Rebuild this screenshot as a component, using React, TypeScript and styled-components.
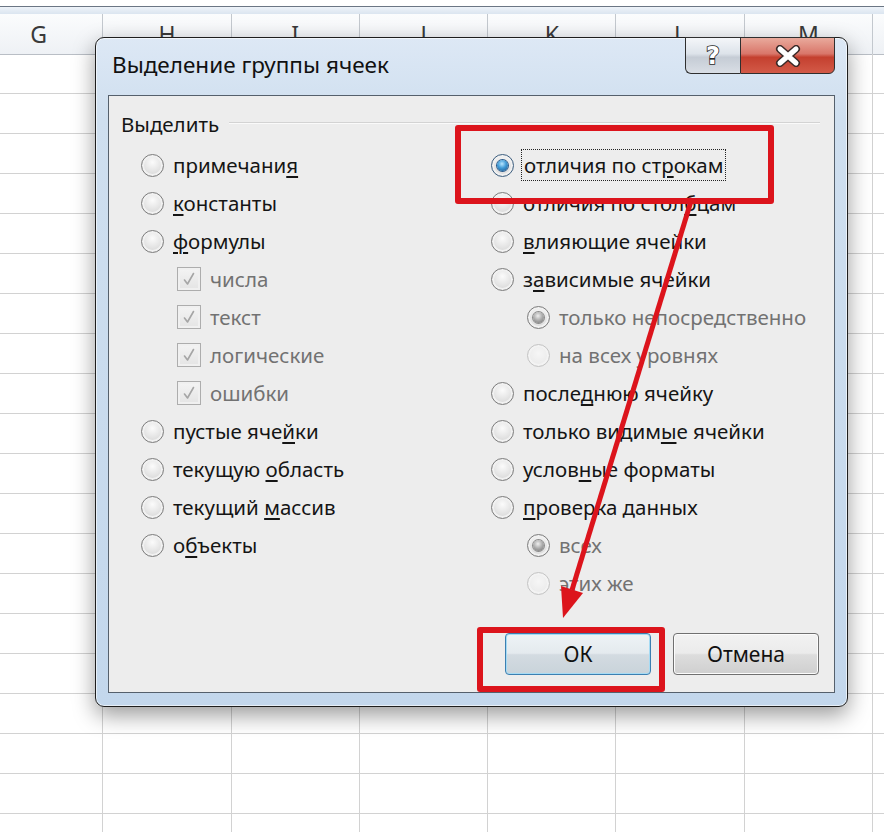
import React from 'react'
import styled, { createGlobalStyle } from 'styled-components'

const GlobalStyle = createGlobalStyle`
  html, body {
    margin: 0;
    padding: 0;
    background: #ffffff;
  }
  body {
    width: 884px;
    height: 832px;
    overflow: hidden;
    font-family: 'Noto Sans', 'Open Sans', sans-serif;
  }
`

const Page = styled.div`
  position: relative;
  width: 884px;
  height: 832px;
  overflow: hidden;
  background: #ffffff;
`

// ---------- spreadsheet behind the dialog ----------

const TopStrip = styled.div`
  height: 6px;
  background: #ffffff;
  border-bottom: 1px solid #6b7684;
`

const BlueStrip = styled.div`
  height: 7px;
  background: linear-gradient(to bottom, #eef3f9, #dbe5f0);
`

const Sheet = styled.div`
  display: grid;
  grid-template-columns: repeat(8, 128.3px);
  grid-auto-rows: 40px;
  margin-left: -25px;
`

const HeaderCell = styled.div`
  height: 41px;
  display: flex;
  align-items: center;
  justify-content: center;
  font-family: 'Noto Sans', sans-serif;
  font-size: 23px;
  color: #3a3a3a;
  background: linear-gradient(to bottom, #fbfcfd, #eef1f5);
  border-right: 1px solid #c3c8ce;
  border-bottom: 1px solid #b9bec5;
  box-sizing: border-box;
`

const Cell = styled.div`
  border-right: 1px solid #d2d2d2;
  border-bottom: 1px solid #d2d2d2;
  box-sizing: border-box;
`

// ---------- dialog window ----------

const Dialog = styled.div`
  position: absolute;
  left: 95px;
  top: 37px;
  width: 753px;
  height: 670px;
  box-sizing: border-box;
  border: 1.5px solid #1e1e1e;
  border-radius: 9px;
  background: linear-gradient(to bottom, #dde8f5 0%, #cfdfef 12%, #c3d7ec 100%);
  box-shadow: 0 8px 22px rgba(0, 0, 0, 0.4), 0 0 0 1px rgba(255, 255, 255, 0.6) inset;
  display: flex;
  flex-direction: column;
`

const TitleBar = styled.div`
  height: 57px;
  display: flex;
  align-items: flex-start;
  justify-content: space-between;
  padding: 0 12px 0 16px;
`

const Title = styled.div`
  margin-top: 11px;
  font-size: 22.5px;
  color: #111;
`

const CaptionButtons = styled.div`
  display: flex;
  margin-top: -1px;
`

const HelpButton = styled.div`
  width: 55px;
  height: 37px;
  box-sizing: border-box;
  border: 1px solid #2f2f2f;
  border-right: none;
  border-radius: 0 0 0 6px;
  background: linear-gradient(to bottom, #f4f6f9 0%, #dde3ea 45%, #c5ccd5 55%, #d9dee5 100%);
  display: flex;
  align-items: center;
  justify-content: center;
  font-family: 'DejaVu Sans', sans-serif;
  font-weight: bold;
  font-size: 24px;
  color: #ffffff;
  -webkit-text-stroke: 1.6px #2a2a2a;
  paint-order: stroke fill;
`

const CloseButton = styled.div`
  width: 95px;
  height: 37px;
  box-sizing: border-box;
  border: 1px solid #2f2f2f;
  border-radius: 0 0 6px 0;
  background: linear-gradient(to bottom, #e9aa9c 0%, #d9766a 45%, #c4402f 55%, #d35a48 100%);
  display: flex;
  align-items: center;
  justify-content: center;
`

const Client = styled.div`
  flex: 1;
  margin: 0 12px 13px 12px;
  border: 1px solid #55606c;
  background: #ededed;
  display: flex;
  flex-direction: column;
  font-size: 20.5px;
  color: #151515;
`

const GroupHeader = styled.div`
  display: flex;
  align-items: center;
  gap: 10px;
  height: 32px;
  margin: 12px 14px 0 12px;
`

const GroupLine = styled.div`
  flex: 1;
  height: 1px;
  margin-top: -4px;
  background: #d3d3d3;
  box-shadow: 0 1px 0 #fafafa;
`

const Columns = styled.div`
  display: grid;
  grid-template-columns: 350px 1fr;
  margin-top: 6px;
  padding-left: 32px;
`

const Column = styled.div`
  display: flex;
  flex-direction: column;
`

const Row = styled.div<{ $indent?: boolean; $muted?: boolean }>`
  display: flex;
  align-items: center;
  height: 38px;
  gap: 9px;
  padding-left: ${(p) => (p.$indent ? '36px' : '0')};
  color: ${(p) => (p.$muted ? '#727272' : '#151515')};
  white-space: nowrap;
`

const Key = styled.span`
  text-decoration: underline;
  text-decoration-thickness: 2px;
  text-underline-offset: 3px;
`

const Focus = styled.span`
  outline: 1px dotted #222;
  outline-offset: 1px;
  padding: 0 1px;
`

const RadioCircle = styled.span<{ $state: 'off' | 'on' | 'grey' | 'disabled' }>`
  position: relative;
  width: 23px;
  height: 23px;
  flex: none;
  box-sizing: border-box;
  border-radius: 50%;
  border: 1px solid ${(p) => (p.$state === 'disabled' ? '#c4c4c4' : p.$state === 'on' ? '#3d5f80' : '#7d7d7d')};
  background: ${(p) =>
    p.$state === 'disabled'
      ? 'radial-gradient(circle at 50% 40%, #f6f6f6, #e6e6e6)'
      : 'radial-gradient(circle at 50% 35%, #fbfbfb 0%, #dcdcdc 70%, #c8c8c8 100%)'};
  box-shadow: inset 0 0 0 2px ${(p) => (p.$state === 'disabled' ? '#f3f3f3' : '#f1f1f1')};

  &::after {
    content: '';
    display: ${(p) => (p.$state === 'on' || p.$state === 'grey' ? 'block' : 'none')};
    position: absolute;
    left: 5px;
    top: 5px;
    width: 11px;
    height: 11px;
    border-radius: 50%;
    background: ${(p) =>
      p.$state === 'on'
        ? 'radial-gradient(circle at 45% 35%, #b8e6ff 0%, #3f9ad6 45%, #1b4f86 100%)'
        : 'radial-gradient(circle at 45% 35%, #eeeeee 0%, #a9a9a9 50%, #6e6e6e 100%)'};
    box-shadow: 0 0 0 1px ${(p) => (p.$state === 'on' ? '#2a5a8a' : '#8a8a8a')};
  }
`

const CheckBox = styled.span`
  width: 24px;
  height: 24px;
  flex: none;
  box-sizing: border-box;
  border: 1px solid #adadad;
  background: linear-gradient(to bottom, #f4f4f4, #e4e4e4);
  box-shadow: inset 0 0 0 2px #f0f0f0;
  display: flex;
  align-items: center;
  justify-content: center;
`

const ButtonRow = styled.div`
  margin-top: auto;
  display: flex;
  justify-content: flex-end;
  gap: 22px;
  padding: 0 15px 17px 0;
`

const PushButton = styled.div<{ $default?: boolean }>`
  width: 146px;
  height: 42px;
  box-sizing: border-box;
  border: 1px solid ${(p) => (p.$default ? '#3c7fb1' : '#707070')};
  border-radius: 4px;
  background: ${(p) =>
    p.$default
      ? 'linear-gradient(to bottom, #eef3f6 0%, #e4eaee 48%, #d3dbe1 52%, #c9d3da 100%)'
      : 'linear-gradient(to bottom, #f2f2f2 0%, #ebebeb 48%, #dddddd 52%, #cfcfcf 100%)'};
  box-shadow: inset 0 0 0 1px ${(p) => (p.$default ? '#a6dbf4' : '#fcfcfc')};
  display: flex;
  align-items: center;
  justify-content: center;
  font-size: 21px;
  color: #111;
`

// ---------- annotations drawn over the screenshot ----------

const Highlight = styled.div<{ $x: number; $y: number; $w: number; $h: number }>`
  position: absolute;
  left: ${(p) => p.$x}px;
  top: ${(p) => p.$y}px;
  width: ${(p) => p.$w}px;
  height: ${(p) => p.$h}px;
  box-sizing: border-box;
  border: 6px solid #dc141c;
  border-radius: 3px;
  pointer-events: none;
`

const ArrowLayer = styled.svg`
  position: absolute;
  left: 0;
  top: 0;
  pointer-events: none;
`

type RadioState = 'off' | 'on' | 'grey' | 'disabled'

const Radio = ({
  state = 'off',
  indent,
  muted,
  children,
}: {
  state?: RadioState
  indent?: boolean
  muted?: boolean
  children: React.ReactNode
}) => (
  <Row $indent={indent} $muted={muted}>
    <RadioCircle $state={state} />
    <span>{children}</span>
  </Row>
)

const Check = ({ children }: { children: React.ReactNode }) => (
  <Row $indent $muted>
    <CheckBox>
      <svg width="16" height="16" viewBox="0 0 16 16">
        <path d="M3.5 9 L6.5 13 L12.5 2.5" fill="none" stroke="#a5a5a5" strokeWidth="1.6" strokeLinecap="round" strokeLinejoin="round" />
      </svg>
    </CheckBox>
    <span>{children}</span>
  </Row>
)

const letters = ['G', 'H', 'I', 'J', 'K', 'L', 'M', '']

const App = () => {
  return (
    <Page>
      <GlobalStyle />
      <TopStrip />
      <BlueStrip />
      <Sheet>
        {letters.map((l, i) => (
          <HeaderCell key={'h' + i}>{l}</HeaderCell>
        ))}
        {Array.from({ length: 8 * 20 }).map((_, i) => (
          <Cell key={i} />
        ))}
      </Sheet>

      <Dialog>
        <TitleBar>
          <Title>Выделение группы ячеек</Title>
          <CaptionButtons>
            <HelpButton>?</HelpButton>
            <CloseButton>
              <svg width="34" height="22" viewBox="0 0 34 22">
                <path d="M9 4 L25 18 M25 4 L9 18" stroke="#3a2a28" strokeWidth="8" strokeLinecap="round" />
                <path d="M9 4 L25 18 M25 4 L9 18" stroke="#ffffff" strokeWidth="5" strokeLinecap="round" />
              </svg>
            </CloseButton>
          </CaptionButtons>
        </TitleBar>

        <Client>
          <GroupHeader>
            <span>Выделить</span>
            <GroupLine />
          </GroupHeader>

          <Columns>
            <Column>
              <Radio>примечани<Key>я</Key></Radio>
              <Radio><Key>к</Key>онстанты</Radio>
              <Radio><Key>ф</Key>ормулы</Radio>
              <Check>числа</Check>
              <Check>текст</Check>
              <Check>логические</Check>
              <Check>ошибки</Check>
              <Radio>пустые яче<Key>й</Key>ки</Radio>
              <Radio>текущую <Key>о</Key>бласть</Radio>
              <Radio>текущий <Key>м</Key>ассив</Radio>
              <Radio>о<Key>б</Key>ъекты</Radio>
            </Column>
            <Column>
              <Radio state="on">
                <Focus>отличия по ст<Key>р</Key>окам</Focus>
              </Radio>
              <Radio>отличия по стол<Key>б</Key>цам</Radio>
              <Radio><Key>в</Key>лияющие ячейки</Radio>
              <Radio>з<Key>а</Key>висимые ячейки</Radio>
              <Radio state="grey" indent muted>только непосредственно</Radio>
              <Radio state="disabled" indent muted>на всех уровнях</Radio>
              <Radio>после<Key>д</Key>нюю ячейку</Radio>
              <Radio>только видим<Key>ы</Key>е ячейки</Radio>
              <Radio>услов<Key>н</Key>ые форматы</Radio>
              <Radio><Key>п</Key>роверка данных</Radio>
              <Radio state="grey" indent muted>всех</Radio>
              <Radio state="disabled" indent muted>этих же</Radio>
            </Column>
          </Columns>

          <ButtonRow>
            <PushButton $default>ОК</PushButton>
            <PushButton>Отмена</PushButton>
          </ButtonRow>
        </Client>
      </Dialog>

      <Highlight $x={455} $y={125} $w={319} $h={79} />
      <Highlight $x={477} $y={627} $w={188} $h={65} />

      <ArrowLayer width="884" height="832" viewBox="0 0 884 832">
        <line x1="692" y1="198" x2="572" y2="590" stroke="#dc141c" strokeWidth="5" />
        <polygon points="563,618 583,593 561,586" fill="#dc141c" />
      </ArrowLayer>
    </Page>
  )
}

export default App
